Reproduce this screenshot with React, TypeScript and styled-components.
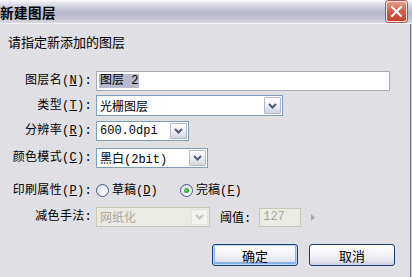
import React from "react";
import styled, { createGlobalStyle, css } from "styled-components";

const Global = createGlobalStyle`
  html, body { margin: 0; padding: 0; background: #e0dfe3; }
  body { width: 412px; height: 277px; overflow: hidden; }
`;

const FONT = `"Liberation Mono", "Noto Sans CJK SC", monospace`;
const CJK = `"Noto Sans CJK SC", "Liberation Sans", sans-serif`;

const Window = styled.div`
  width: 412px;
  height: 277px;
  display: flex;
  flex-direction: column;
  overflow: hidden;
  font-family: ${FONT};
  font-size: 12px;
  color: #000;
`;

const TitleBar = styled.div`
  height: 23px;
  flex: 0 0 23px;
  display: flex;
  align-items: center;
  justify-content: space-between;
  background: linear-gradient(
    #fbfbfd 0%,
    #e6e6ee 12%,
    #c9c9d8 35%,
    #b9b9cc 55%,
    #c3c3d3 80%,
    #d9d9e3 100%
  );
  border-bottom: 1px solid #f4f4f8;
`;

const TitleText = styled.span`
  margin-left: 0;
  font-family: ${CJK};
  font-weight: 700;
  font-size: 13.5px;
  letter-spacing: 0.5px;
  line-height: 16px;
`;

const CloseButton = styled.div`
  width: 19px;
  height: 19px;
  margin-right: 5px;
  margin-top: -1px;
  border: 1px solid #f6e7e4;
  border-radius: 3px;
  background: linear-gradient(#e89a86 0%, #d4624b 45%, #c2412d 100%);
  display: flex;
  align-items: center;
  justify-content: center;
  box-shadow: 0 0 0 1px #b2564a;
`;

const Frame = styled.div`
  flex: 1;
  display: flex;
  background: #d6d5dc;
  padding-right: 1px;
`;

const Body = styled.div`
  flex: 1;
  background: #e0dfe3;
  border-right: 1px solid #6e6a8e;
  display: flex;
  flex-direction: column;
`;

const Intro = styled.div`
  margin: 10px 0 0 8px;
  font-family: ${CJK};
  font-size: 13px;
  line-height: 16px;
`;

const Row = styled.div<{ $top: number; $h: number }>`
  display: grid;
  grid-template-columns: 92px 1fr;
  column-gap: 4px;
  align-items: center;
  margin-top: ${(p) => p.$top}px;
  height: ${(p) => p.$h}px;
`;

const Label = styled.label`
  text-align: right;
  white-space: nowrap;
  line-height: 14px;
  letter-spacing: 0.3px;
`;

const Key = styled.span`
  text-decoration: underline;
  text-underline-offset: 1px;
`;

const Controls = styled.div`
  display: flex;
  align-items: center;
  height: 100%;
`;

const TextInput = styled.div<{ $w: number }>`
  box-sizing: border-box;
  width: ${(p) => p.$w}px;
  height: 20px;
  background: #fff;
  border: 1px solid #a5acb5;
  display: flex;
  align-items: center;
  padding-left: 2px;
`;

const Selected = styled.span`
  background: #b8bbcb;
  line-height: 14px;
  padding: 0 1px;
`;

const Select = styled.div<{ $w: number; $disabled?: boolean }>`
  box-sizing: border-box;
  width: ${(p) => p.$w}px;
  height: 100%;
  background: #fff;
  border: 1px solid #7f9db9;
  display: flex;
  align-items: center;
  ${(p) =>
    p.$disabled &&
    css`
      background: #ebebe6;
      border-color: #c9c7ba;
      color: #aca899;
    `}
`;

const SelectValue = styled.span`
  flex: 1;
  padding-left: 3px;
  white-space: nowrap;
  overflow: hidden;
`;

const DropButton = styled.div<{ $disabled?: boolean }>`
  box-sizing: border-box;
  width: 17px;
  height: calc(100% - 2px);
  margin-right: 1px;
  border: 1px solid #b4b8cc;
  border-radius: 1px;
  background: linear-gradient(#ffffff 0%, #eeeef4 50%, #d4d4e0 100%);
  display: flex;
  align-items: center;
  justify-content: center;
  ${(p) =>
    p.$disabled &&
    css`
      background: #f2f2ee;
      border-color: #e4e3dc;
    `}
`;

const RadioGroup = styled.div`
  display: flex;
  align-items: center;
  height: 100%;
`;

const RadioItem = styled.div<{ $w: number }>`
  display: flex;
  align-items: center;
  width: ${(p) => p.$w}px;
  gap: 3px;
`;

const RadioCircle = styled.span<{ $on?: boolean }>`
  box-sizing: border-box;
  width: 13px;
  height: 13px;
  border-radius: 50%;
  border: 1px solid #3e5b8a;
  background: radial-gradient(circle at 65% 70%, #ffffff 0%, #e6e6ee 60%, #cfd0dc 100%);
  display: flex;
  align-items: center;
  justify-content: center;
  ${(p) =>
    p.$on &&
    css`
      &::after {
        content: "";
        width: 5px;
        height: 5px;
        border-radius: 50%;
        background: radial-gradient(circle at 40% 40%, #7fe07f 0%, #21a121 60%, #138013 100%);
      }
    `}
`;

const RadioText = styled.span`
  line-height: 14px;
`;

const SmallLabel = styled.span`
  margin-left: 10px;
  white-space: nowrap;
`;

const NumInput = styled.div`
  box-sizing: border-box;
  margin-left: 8px;
  width: 42px;
  height: 19px;
  border: 1px solid #c9c7ba;
  background: #ebebe6;
  color: #aca899;
  display: flex;
  align-items: center;
  padding-left: 3px;
`;

const Arrow = styled.span`
  margin-left: 10px;
  display: flex;
  align-items: center;
`;

const ButtonBar = styled.div`
  display: flex;
  justify-content: flex-end;
  gap: 11px;
  margin-top: 17px;
  padding-right: 15px;
`;

const Button = styled.div<{ $default?: boolean }>`
  box-sizing: border-box;
  width: 86px;
  height: 22px;
  border: 1px solid #1d3d70;
  border-radius: 3px;
  background: linear-gradient(#ffffff 0%, #f4f4f8 45%, #e2e2ec 80%, #cfcfe0 100%);
  display: flex;
  align-items: center;
  justify-content: center;
  font-family: ${CJK};
  font-size: 13px;
  ${(p) =>
    p.$default &&
    css`
      box-shadow: inset 0 0 0 1px #bcd4f6, inset 0 -1px 0 2px #8ab0e8;
    `}
`;

const Chevron = ({ color = "#4d5a7a" }: { color?: string }) => (
  <svg width="9" height="6" viewBox="0 0 9 6">
    <path d="M1 1 L4.5 4.5 L8 1" fill="none" stroke={color} strokeWidth="2" />
  </svg>
);

export default function App() {
  return (
    <Window>
      <Global />
      <TitleBar>
        <TitleText>新建图层</TitleText>
        <CloseButton>
          <svg width="13" height="13" viewBox="0 0 13 13">
            <path d="M2 2 L11 11 M11 2 L2 11" stroke="#fff" strokeWidth="2" strokeLinecap="square" />
          </svg>
        </CloseButton>
      </TitleBar>
      <Frame>
        <Body>
          <Intro>请指定新添加的图层</Intro>

          <Row $top={21} $h={20}>
            <Label>
              图层名(<Key>N</Key>):
            </Label>
            <Controls>
              <TextInput $w={294}>
                <Selected>图层 2</Selected>
              </TextInput>
            </Controls>
          </Row>

          <Row $top={4} $h={21}>
            <Label>
              类型(<Key>T</Key>):
            </Label>
            <Controls>
              <Select $w={187}>
                <SelectValue>光栅图层</SelectValue>
                <DropButton>
                  <Chevron />
                </DropButton>
              </Select>
            </Controls>
          </Row>

          <Row $top={5} $h={20}>
            <Label>
              分辨率(<Key>R</Key>):
            </Label>
            <Controls>
              <Select $w={93}>
                <SelectValue>600.0dpi</SelectValue>
                <DropButton>
                  <Chevron />
                </DropButton>
              </Select>
            </Controls>
          </Row>

          <Row $top={7} $h={20}>
            <Label>
              颜色模式(<Key>C</Key>):
            </Label>
            <Controls>
              <Select $w={112}>
                <SelectValue>黑白(2bit)</SelectValue>
                <DropButton>
                  <Chevron />
                </DropButton>
              </Select>
            </Controls>
          </Row>

          <Row $top={14} $h={17}>
            <Label>
              印刷属性(<Key>P</Key>):
            </Label>
            <RadioGroup>
              <RadioItem $w={84}>
                <RadioCircle />
                <RadioText>
                  草稿(<Key>D</Key>)
                </RadioText>
              </RadioItem>
              <RadioItem $w={80}>
                <RadioCircle $on />
                <RadioText>
                  完稿(<Key>F</Key>)
                </RadioText>
              </RadioItem>
            </RadioGroup>
          </Row>

          <Row $top={8} $h={20}>
            <Label>减色手法:</Label>
            <Controls>
              <Select $w={114} $disabled>
                <SelectValue>网纸化</SelectValue>
                <DropButton $disabled>
                  <Chevron color="#c9c7ba" />
                </DropButton>
              </Select>
              <SmallLabel>阈值:</SmallLabel>
              <NumInput>127</NumInput>
              <Arrow>
                <svg width="4" height="7" viewBox="0 0 4 7">
                  <path d="M0 0 L4 3.5 L0 7 Z" fill="#a9a9b4" />
                </svg>
              </Arrow>
            </Controls>
          </Row>

          <ButtonBar>
            <Button $default>确定</Button>
            <Button>取消</Button>
          </ButtonBar>
        </Body>
      </Frame>
    </Window>
  );
}
